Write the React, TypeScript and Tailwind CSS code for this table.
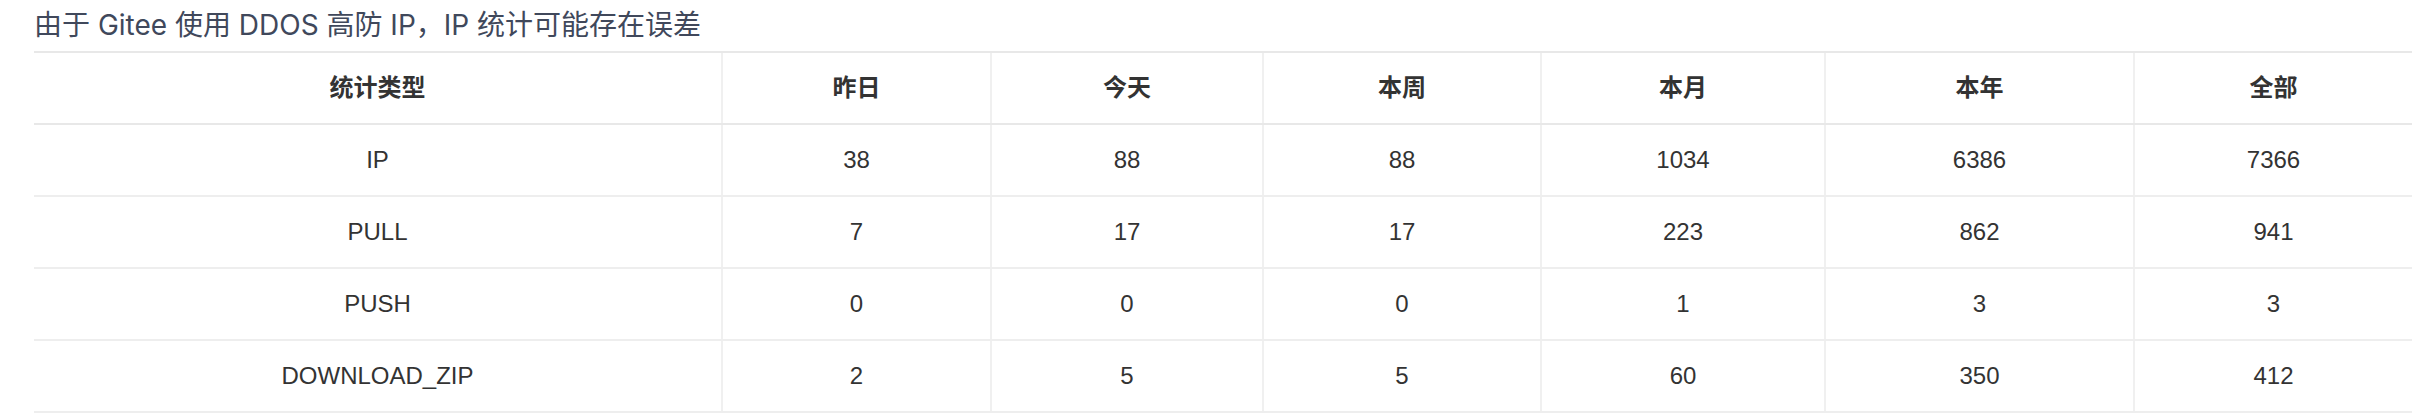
import React from "react";

const headers = ["统计类型", "昨日", "今天", "本周", "本月", "本年", "全部"];
const rows: string[][] = [
  ["IP", "38", "88", "88", "1034", "6386", "7366"],
  ["PULL", "7", "17", "17", "223", "862", "941"],
  ["PUSH", "0", "0", "0", "1", "3", "3"],
  ["DOWNLOAD_ZIP", "2", "5", "5", "60", "350", "412"],
];

const cellFont = { fontFamily: '"Liberation Sans", "Noto Sans CJK SC", sans-serif' };

export default function App() {
  return (
    <div className="bg-white w-[2412px] h-[420px] overflow-hidden pl-[34px]">
      <div
        className="h-[51px] flex items-center text-[28px] text-[#40485b] pb-[2px]"
        style={{ fontFamily: '"Inter", "Noto Sans CJK SC", sans-serif' }}
      >
        由于 Gitee 使用 DDOS 高防 IP，IP 统计可能存在误差
      </div>
      <div className="border-t-2 border-[#e8e8e8]" style={cellFont}>
        <div className="grid grid-cols-[687px_269px_272px_278px_284px_309px_279px] h-[72px] border-b-2 border-[#e8e8e8]">
          {headers.map((h, i) => (
            <div
              key={h}
              className={`flex items-center justify-center text-[24px] font-bold text-[#333333] ${i > 0 ? "border-l-2 border-[#f0f0f0]" : ""}`}
            >
              {h}
            </div>
          ))}
        </div>
        {rows.map((r) => (
          <div
            key={r[0]}
            className="grid grid-cols-[687px_269px_272px_278px_284px_309px_279px] h-[72px] border-b-2 border-[#eeeeee]"
          >
            {r.map((c, i) => (
              <div
                key={i}
                className={`flex items-center justify-center text-[24px] text-[#333333] ${i > 0 ? "border-l-2 border-[#f0f0f0]" : ""}`}
              >
                {c}
              </div>
            ))}
          </div>
        ))}
      </div>
    </div>
  );
}
